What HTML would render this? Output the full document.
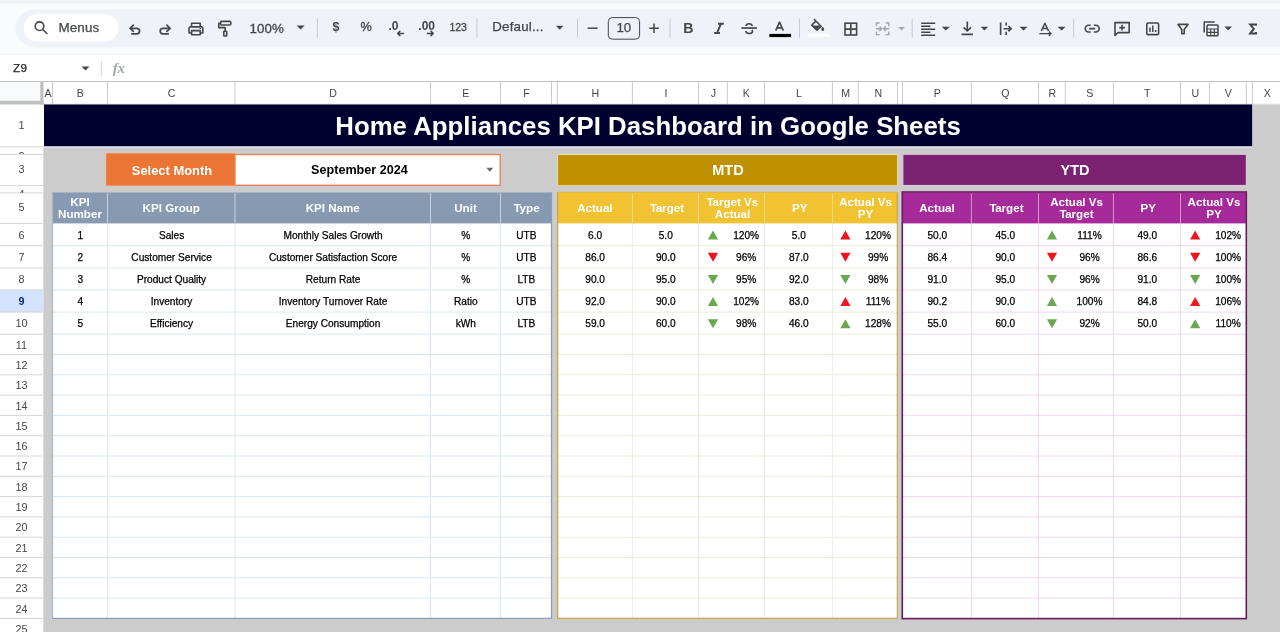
<!DOCTYPE html>
<html lang="en">
<head>
<meta charset="utf-8">
<title>Home Appliances KPI Dashboard in Google Sheets</title>
<style>
html,body{margin:0;padding:0;background:#f9fbfd;}
body{width:1280px;height:632px;overflow:hidden;position:relative;font-family:"Liberation Sans",sans-serif;}
#bg,#icons{position:absolute;left:0;top:0;width:1280px;height:632px;display:block;}
#txt{position:absolute;left:0;top:0;width:1280px;height:632px;will-change:transform;}
.t{position:absolute;white-space:nowrap;margin:0;padding:0;}
</style>
</head>
<body>
<svg id="bg" width="1280" height="632" viewBox="0 0 1280 632">
<rect x="0.00" y="0.00" width="1280.00" height="632.00" fill="#f9fbfd" />
<rect x="0.00" y="0.00" width="1280.00" height="2.60" fill="#f1f3f4" />
<line x1="0.00" y1="2.80" x2="1280.00" y2="2.80" stroke="#e4e6e8" stroke-width="0.8" />
<path d="M34.5 9.4 H1280 V47.3 H34.5 A18.95 18.95 0 0 1 34.5 9.4 Z" fill="#eef2f9"/>
<rect x="23.7" y="14.2" width="95" height="27.3" rx="13.65" fill="#ffffff"/>
<rect x="0.00" y="54.50" width="1280.00" height="27.00" fill="#ffffff" />
<line x1="0.00" y1="54.30" x2="1280.00" y2="54.30" stroke="#eef1f5" stroke-width="0.8" />
<rect x="44.00" y="104.50" width="1236.00" height="527.50" fill="#cccccc" />
<rect x="0.00" y="104.50" width="44.00" height="527.50" fill="#ffffff" />
<rect x="43.30" y="146.30" width="0.90" height="485.70" fill="#cccccc" />
<rect x="0.00" y="81.50" width="1280.00" height="23.00" fill="#ffffff" />
<rect x="0.00" y="81.50" width="40.30" height="19.20" fill="#f8f9fa" />
<rect x="40.30" y="81.50" width="3.20" height="23.00" fill="#c0c0c0" />
<rect x="0.00" y="100.70" width="43.50" height="3.80" fill="#c0c0c0" />
<line x1="0.00" y1="81.50" x2="1280.00" y2="81.50" stroke="#c7c7c7" stroke-width="1" />
<line x1="52.50" y1="81.50" x2="52.50" y2="104.50" stroke="#c9c9c9" stroke-width="1" />
<line x1="107.50" y1="81.50" x2="107.50" y2="104.50" stroke="#c9c9c9" stroke-width="1" />
<line x1="235.00" y1="81.50" x2="235.00" y2="104.50" stroke="#c9c9c9" stroke-width="1" />
<line x1="430.50" y1="81.50" x2="430.50" y2="104.50" stroke="#c9c9c9" stroke-width="1" />
<line x1="500.50" y1="81.50" x2="500.50" y2="104.50" stroke="#c9c9c9" stroke-width="1" />
<line x1="551.50" y1="81.50" x2="551.50" y2="104.50" stroke="#c9c9c9" stroke-width="1" />
<line x1="557.30" y1="81.50" x2="557.30" y2="104.50" stroke="#c9c9c9" stroke-width="1" />
<line x1="632.40" y1="81.50" x2="632.40" y2="104.50" stroke="#c9c9c9" stroke-width="1" />
<line x1="698.50" y1="81.50" x2="698.50" y2="104.50" stroke="#c9c9c9" stroke-width="1" />
<line x1="727.30" y1="81.50" x2="727.30" y2="104.50" stroke="#c9c9c9" stroke-width="1" />
<line x1="764.60" y1="81.50" x2="764.60" y2="104.50" stroke="#c9c9c9" stroke-width="1" />
<line x1="832.40" y1="81.50" x2="832.40" y2="104.50" stroke="#c9c9c9" stroke-width="1" />
<line x1="858.20" y1="81.50" x2="858.20" y2="104.50" stroke="#c9c9c9" stroke-width="1" />
<line x1="897.50" y1="81.50" x2="897.50" y2="104.50" stroke="#c9c9c9" stroke-width="1" />
<line x1="902.50" y1="81.50" x2="902.50" y2="104.50" stroke="#c9c9c9" stroke-width="1" />
<line x1="971.40" y1="81.50" x2="971.40" y2="104.50" stroke="#c9c9c9" stroke-width="1" />
<line x1="1038.50" y1="81.50" x2="1038.50" y2="104.50" stroke="#c9c9c9" stroke-width="1" />
<line x1="1065.30" y1="81.50" x2="1065.30" y2="104.50" stroke="#c9c9c9" stroke-width="1" />
<line x1="1113.40" y1="81.50" x2="1113.40" y2="104.50" stroke="#c9c9c9" stroke-width="1" />
<line x1="1180.50" y1="81.50" x2="1180.50" y2="104.50" stroke="#c9c9c9" stroke-width="1" />
<line x1="1209.60" y1="81.50" x2="1209.60" y2="104.50" stroke="#c9c9c9" stroke-width="1" />
<line x1="1246.30" y1="81.50" x2="1246.30" y2="104.50" stroke="#c9c9c9" stroke-width="1" />
<line x1="1252.40" y1="81.50" x2="1252.40" y2="104.50" stroke="#c9c9c9" stroke-width="1" />
<line x1="43.50" y1="104.20" x2="1280.00" y2="104.20" stroke="#d0d0d0" stroke-width="0.8" />
<rect x="0.00" y="290.00" width="43.50" height="22.10" fill="#d3e3fd" />
<line x1="0.00" y1="146.80" x2="43.30" y2="146.80" stroke="#d6d6d6" stroke-width="1" />
<line x1="0.00" y1="154.40" x2="43.30" y2="154.40" stroke="#d6d6d6" stroke-width="1" />
<line x1="0.00" y1="185.60" x2="43.30" y2="185.60" stroke="#d6d6d6" stroke-width="1" />
<line x1="0.00" y1="192.90" x2="43.30" y2="192.90" stroke="#d6d6d6" stroke-width="1" />
<line x1="0.00" y1="223.40" x2="43.30" y2="223.40" stroke="#d6d6d6" stroke-width="1" />
<line x1="0.00" y1="245.70" x2="43.30" y2="245.70" stroke="#d6d6d6" stroke-width="1" />
<line x1="0.00" y1="268.00" x2="43.30" y2="268.00" stroke="#d6d6d6" stroke-width="1" />
<line x1="0.00" y1="290.00" x2="43.30" y2="290.00" stroke="#d6d6d6" stroke-width="1" />
<line x1="0.00" y1="312.10" x2="43.30" y2="312.10" stroke="#d6d6d6" stroke-width="1" />
<line x1="0.00" y1="334.20" x2="43.30" y2="334.20" stroke="#d6d6d6" stroke-width="1" />
<line x1="0.00" y1="354.50" x2="43.30" y2="354.50" stroke="#d6d6d6" stroke-width="1" />
<line x1="0.00" y1="374.80" x2="43.30" y2="374.80" stroke="#d6d6d6" stroke-width="1" />
<line x1="0.00" y1="395.10" x2="43.30" y2="395.10" stroke="#d6d6d6" stroke-width="1" />
<line x1="0.00" y1="415.40" x2="43.30" y2="415.40" stroke="#d6d6d6" stroke-width="1" />
<line x1="0.00" y1="435.70" x2="43.30" y2="435.70" stroke="#d6d6d6" stroke-width="1" />
<line x1="0.00" y1="456.00" x2="43.30" y2="456.00" stroke="#d6d6d6" stroke-width="1" />
<line x1="0.00" y1="476.30" x2="43.30" y2="476.30" stroke="#d6d6d6" stroke-width="1" />
<line x1="0.00" y1="496.60" x2="43.30" y2="496.60" stroke="#d6d6d6" stroke-width="1" />
<line x1="0.00" y1="516.90" x2="43.30" y2="516.90" stroke="#d6d6d6" stroke-width="1" />
<line x1="0.00" y1="537.20" x2="43.30" y2="537.20" stroke="#d6d6d6" stroke-width="1" />
<line x1="0.00" y1="557.50" x2="43.30" y2="557.50" stroke="#d6d6d6" stroke-width="1" />
<line x1="0.00" y1="577.80" x2="43.30" y2="577.80" stroke="#d6d6d6" stroke-width="1" />
<line x1="0.00" y1="598.10" x2="43.30" y2="598.10" stroke="#d6d6d6" stroke-width="1" />
<line x1="0.00" y1="618.40" x2="43.30" y2="618.40" stroke="#d6d6d6" stroke-width="1" />
<rect x="44.00" y="104.50" width="1208.10" height="41.90" fill="#00002f" />
<rect x="44.00" y="146.40" width="1208.10" height="1.40" fill="#e2e2ee" />
<rect x="105.70" y="152.70" width="129.30" height="33.60" fill="#f0c3aa" />
<rect x="106.20" y="153.40" width="128.80" height="32.20" fill="#ea7535" />
<rect x="235.00" y="154.50" width="265.20" height="30.80" fill="#ffffff" stroke="#e9845a" stroke-width="1.4"/>
<path d="M486.3 167.7 H493.3 L489.8 171.8 Z" fill="#6b6b6b"/>
<rect x="557.30" y="154.10" width="340.60" height="31.90" fill="#efdfae" />
<rect x="558.10" y="155.00" width="339.00" height="30.20" fill="#bf9000" />
<rect x="902.60" y="154.10" width="344.00" height="31.70" fill="#e3c3e0" />
<rect x="903.40" y="154.90" width="342.40" height="30.00" fill="#7a2172" />
<rect x="52.50" y="192.30" width="499.00" height="426.10" fill="#ffffff" />
<rect x="52.50" y="192.30" width="499.00" height="31.10" fill="#879ab2" />
<line x1="52.50" y1="245.70" x2="551.50" y2="245.70" stroke="#d9e9f3" stroke-width="1" />
<line x1="52.50" y1="268.00" x2="551.50" y2="268.00" stroke="#d9e9f3" stroke-width="1" />
<line x1="52.50" y1="290.00" x2="551.50" y2="290.00" stroke="#d9e9f3" stroke-width="1" />
<line x1="52.50" y1="312.10" x2="551.50" y2="312.10" stroke="#d9e9f3" stroke-width="1" />
<line x1="52.50" y1="334.20" x2="551.50" y2="334.20" stroke="#d9e9f3" stroke-width="1" />
<line x1="52.50" y1="354.50" x2="551.50" y2="354.50" stroke="#d9e9f3" stroke-width="1" />
<line x1="52.50" y1="374.80" x2="551.50" y2="374.80" stroke="#d9e9f3" stroke-width="1" />
<line x1="52.50" y1="395.10" x2="551.50" y2="395.10" stroke="#d9e9f3" stroke-width="1" />
<line x1="52.50" y1="415.40" x2="551.50" y2="415.40" stroke="#d9e9f3" stroke-width="1" />
<line x1="52.50" y1="435.70" x2="551.50" y2="435.70" stroke="#d9e9f3" stroke-width="1" />
<line x1="52.50" y1="456.00" x2="551.50" y2="456.00" stroke="#d9e9f3" stroke-width="1" />
<line x1="52.50" y1="476.30" x2="551.50" y2="476.30" stroke="#d9e9f3" stroke-width="1" />
<line x1="52.50" y1="496.60" x2="551.50" y2="496.60" stroke="#d9e9f3" stroke-width="1" />
<line x1="52.50" y1="516.90" x2="551.50" y2="516.90" stroke="#d9e9f3" stroke-width="1" />
<line x1="52.50" y1="537.20" x2="551.50" y2="537.20" stroke="#d9e9f3" stroke-width="1" />
<line x1="52.50" y1="557.50" x2="551.50" y2="557.50" stroke="#d9e9f3" stroke-width="1" />
<line x1="52.50" y1="577.80" x2="551.50" y2="577.80" stroke="#d9e9f3" stroke-width="1" />
<line x1="52.50" y1="598.10" x2="551.50" y2="598.10" stroke="#d9e9f3" stroke-width="1" />
<line x1="107.50" y1="223.40" x2="107.50" y2="618.40" stroke="#d9e9f3" stroke-width="1" />
<line x1="107.50" y1="193.30" x2="107.50" y2="223.40" stroke="#cddbe8" stroke-width="0.9" />
<line x1="235.00" y1="223.40" x2="235.00" y2="618.40" stroke="#d9e9f3" stroke-width="1" />
<line x1="235.00" y1="193.30" x2="235.00" y2="223.40" stroke="#cddbe8" stroke-width="0.9" />
<line x1="430.50" y1="223.40" x2="430.50" y2="618.40" stroke="#d9e9f3" stroke-width="1" />
<line x1="430.50" y1="193.30" x2="430.50" y2="223.40" stroke="#cddbe8" stroke-width="0.9" />
<line x1="500.50" y1="223.40" x2="500.50" y2="618.40" stroke="#d9e9f3" stroke-width="1" />
<line x1="500.50" y1="193.30" x2="500.50" y2="223.40" stroke="#cddbe8" stroke-width="0.9" />
<line x1="52.50" y1="192.30" x2="52.50" y2="618.40" stroke="#a9b7c9" stroke-width="1.2" />
<line x1="551.50" y1="192.30" x2="551.50" y2="618.90" stroke="#8e9fb5" stroke-width="1.3" />
<line x1="52.50" y1="618.40" x2="551.50" y2="618.40" stroke="#8e9fb5" stroke-width="1.3" />
<rect x="557.30" y="192.30" width="340.20" height="426.10" fill="#ffffff" />
<rect x="557.30" y="192.30" width="340.20" height="31.10" fill="#f1c232" />
<line x1="557.30" y1="245.70" x2="897.50" y2="245.70" stroke="#e9eddc" stroke-width="1" />
<line x1="557.30" y1="268.00" x2="897.50" y2="268.00" stroke="#e9eddc" stroke-width="1" />
<line x1="557.30" y1="290.00" x2="897.50" y2="290.00" stroke="#e9eddc" stroke-width="1" />
<line x1="557.30" y1="312.10" x2="897.50" y2="312.10" stroke="#e9eddc" stroke-width="1" />
<line x1="557.30" y1="334.20" x2="897.50" y2="334.20" stroke="#e9eddc" stroke-width="1" />
<line x1="557.30" y1="354.50" x2="897.50" y2="354.50" stroke="#e9eddc" stroke-width="1" />
<line x1="557.30" y1="374.80" x2="897.50" y2="374.80" stroke="#e9eddc" stroke-width="1" />
<line x1="557.30" y1="395.10" x2="897.50" y2="395.10" stroke="#e9eddc" stroke-width="1" />
<line x1="557.30" y1="415.40" x2="897.50" y2="415.40" stroke="#e9eddc" stroke-width="1" />
<line x1="557.30" y1="435.70" x2="897.50" y2="435.70" stroke="#e9eddc" stroke-width="1" />
<line x1="557.30" y1="456.00" x2="897.50" y2="456.00" stroke="#e9eddc" stroke-width="1" />
<line x1="557.30" y1="476.30" x2="897.50" y2="476.30" stroke="#e9eddc" stroke-width="1" />
<line x1="557.30" y1="496.60" x2="897.50" y2="496.60" stroke="#e9eddc" stroke-width="1" />
<line x1="557.30" y1="516.90" x2="897.50" y2="516.90" stroke="#e9eddc" stroke-width="1" />
<line x1="557.30" y1="537.20" x2="897.50" y2="537.20" stroke="#e9eddc" stroke-width="1" />
<line x1="557.30" y1="557.50" x2="897.50" y2="557.50" stroke="#e9eddc" stroke-width="1" />
<line x1="557.30" y1="577.80" x2="897.50" y2="577.80" stroke="#e9eddc" stroke-width="1" />
<line x1="557.30" y1="598.10" x2="897.50" y2="598.10" stroke="#e9eddc" stroke-width="1" />
<line x1="632.40" y1="223.40" x2="632.40" y2="618.40" stroke="#e9eddc" stroke-width="1" />
<line x1="632.40" y1="193.30" x2="632.40" y2="223.40" stroke="#f7dc8a" stroke-width="0.9" />
<line x1="698.50" y1="223.40" x2="698.50" y2="618.40" stroke="#e9eddc" stroke-width="1" />
<line x1="698.50" y1="193.30" x2="698.50" y2="223.40" stroke="#f7dc8a" stroke-width="0.9" />
<line x1="764.60" y1="223.40" x2="764.60" y2="618.40" stroke="#e9eddc" stroke-width="1" />
<line x1="764.60" y1="193.30" x2="764.60" y2="223.40" stroke="#f7dc8a" stroke-width="0.9" />
<line x1="832.40" y1="223.40" x2="832.40" y2="618.40" stroke="#e9eddc" stroke-width="1" />
<line x1="832.40" y1="193.30" x2="832.40" y2="223.40" stroke="#f7dc8a" stroke-width="0.9" />
<line x1="557.60" y1="192.30" x2="557.60" y2="618.40" stroke="#c9a64a" stroke-width="1.3" />
<line x1="897.30" y1="192.30" x2="897.30" y2="618.40" stroke="#c9a64a" stroke-width="1.2" />
<line x1="557.30" y1="618.40" x2="897.50" y2="618.40" stroke="#c9a64a" stroke-width="1.3" />
<line x1="557.30" y1="192.30" x2="897.50" y2="192.30" stroke="#d9ad2d" stroke-width="0.8" />
<rect x="902.50" y="192.30" width="343.80" height="426.10" fill="#ffffff" />
<rect x="902.50" y="192.30" width="343.80" height="31.10" fill="#a72a9b" />
<line x1="902.50" y1="245.70" x2="1246.30" y2="245.70" stroke="#efd9ee" stroke-width="1" />
<line x1="902.50" y1="268.00" x2="1246.30" y2="268.00" stroke="#efd9ee" stroke-width="1" />
<line x1="902.50" y1="290.00" x2="1246.30" y2="290.00" stroke="#efd9ee" stroke-width="1" />
<line x1="902.50" y1="312.10" x2="1246.30" y2="312.10" stroke="#efd9ee" stroke-width="1" />
<line x1="902.50" y1="334.20" x2="1246.30" y2="334.20" stroke="#efd9ee" stroke-width="1" />
<line x1="902.50" y1="354.50" x2="1246.30" y2="354.50" stroke="#efd9ee" stroke-width="1" />
<line x1="902.50" y1="374.80" x2="1246.30" y2="374.80" stroke="#efd9ee" stroke-width="1" />
<line x1="902.50" y1="395.10" x2="1246.30" y2="395.10" stroke="#efd9ee" stroke-width="1" />
<line x1="902.50" y1="415.40" x2="1246.30" y2="415.40" stroke="#efd9ee" stroke-width="1" />
<line x1="902.50" y1="435.70" x2="1246.30" y2="435.70" stroke="#efd9ee" stroke-width="1" />
<line x1="902.50" y1="456.00" x2="1246.30" y2="456.00" stroke="#efd9ee" stroke-width="1" />
<line x1="902.50" y1="476.30" x2="1246.30" y2="476.30" stroke="#efd9ee" stroke-width="1" />
<line x1="902.50" y1="496.60" x2="1246.30" y2="496.60" stroke="#efd9ee" stroke-width="1" />
<line x1="902.50" y1="516.90" x2="1246.30" y2="516.90" stroke="#efd9ee" stroke-width="1" />
<line x1="902.50" y1="537.20" x2="1246.30" y2="537.20" stroke="#efd9ee" stroke-width="1" />
<line x1="902.50" y1="557.50" x2="1246.30" y2="557.50" stroke="#efd9ee" stroke-width="1" />
<line x1="902.50" y1="577.80" x2="1246.30" y2="577.80" stroke="#efd9ee" stroke-width="1" />
<line x1="902.50" y1="598.10" x2="1246.30" y2="598.10" stroke="#efd9ee" stroke-width="1" />
<line x1="971.40" y1="223.40" x2="971.40" y2="618.40" stroke="#efd9ee" stroke-width="1" />
<line x1="971.40" y1="193.30" x2="971.40" y2="223.40" stroke="#d9a3d3" stroke-width="0.9" />
<line x1="1038.50" y1="223.40" x2="1038.50" y2="618.40" stroke="#efd9ee" stroke-width="1" />
<line x1="1038.50" y1="193.30" x2="1038.50" y2="223.40" stroke="#d9a3d3" stroke-width="0.9" />
<line x1="1113.40" y1="223.40" x2="1113.40" y2="618.40" stroke="#efd9ee" stroke-width="1" />
<line x1="1113.40" y1="193.30" x2="1113.40" y2="223.40" stroke="#d9a3d3" stroke-width="0.9" />
<line x1="1180.50" y1="223.40" x2="1180.50" y2="618.40" stroke="#efd9ee" stroke-width="1" />
<line x1="1180.50" y1="193.30" x2="1180.50" y2="223.40" stroke="#d9a3d3" stroke-width="0.9" />
<rect x="902.30" y="192.00" width="344.00" height="426.60" fill="none" stroke="#6b1a5e" stroke-width="1.6"/>
<polygon points="707.90,239.55 718.10,239.55 713.00,230.55" fill="#6aa84f"/>
<polygon points="840.30,239.55 850.50,239.55 845.40,230.55" fill="#f0141b"/>
<polygon points="1046.90,239.55 1057.10,239.55 1052.00,230.55" fill="#6aa84f"/>
<polygon points="1190.05,239.55 1200.25,239.55 1195.15,230.55" fill="#f0141b"/>
<polygon points="707.90,252.85 718.10,252.85 713.00,261.85" fill="#f0141b"/>
<polygon points="840.30,252.85 850.50,252.85 845.40,261.85" fill="#f0141b"/>
<polygon points="1046.90,252.85 1057.10,252.85 1052.00,261.85" fill="#f0141b"/>
<polygon points="1190.05,252.85 1200.25,252.85 1195.15,261.85" fill="#f0141b"/>
<polygon points="707.90,275.00 718.10,275.00 713.00,284.00" fill="#6aa84f"/>
<polygon points="840.30,275.00 850.50,275.00 845.40,284.00" fill="#6aa84f"/>
<polygon points="1046.90,275.00 1057.10,275.00 1052.00,284.00" fill="#6aa84f"/>
<polygon points="1190.05,275.00 1200.25,275.00 1195.15,284.00" fill="#6aa84f"/>
<polygon points="707.90,306.05 718.10,306.05 713.00,297.05" fill="#6aa84f"/>
<polygon points="840.30,306.05 850.50,306.05 845.40,297.05" fill="#f0141b"/>
<polygon points="1046.90,306.05 1057.10,306.05 1052.00,297.05" fill="#6aa84f"/>
<polygon points="1190.05,306.05 1200.25,306.05 1195.15,297.05" fill="#f0141b"/>
<polygon points="707.90,319.15 718.10,319.15 713.00,328.15" fill="#6aa84f"/>
<polygon points="840.30,328.15 850.50,328.15 845.40,319.15" fill="#6aa84f"/>
<polygon points="1046.90,319.15 1057.10,319.15 1052.00,328.15" fill="#6aa84f"/>
<polygon points="1190.05,328.15 1200.25,328.15 1195.15,319.15" fill="#6aa84f"/>
</svg>
<svg id="icons" width="1280" height="632" viewBox="0 0 1280 632">
<path d="M81.6 66.6 H89.4 L85.5 70.5 Z" fill="#444746"/>
<line x1="101.3" y1="61" x2="101.3" y2="76" stroke="#d0d3d8" stroke-width="1"/>
<line x1="317.4" y1="18.8" x2="317.4" y2="37.6" stroke="#c7cad0" stroke-width="1"/>
<line x1="476.9" y1="18.8" x2="476.9" y2="37.6" stroke="#c7cad0" stroke-width="1"/>
<line x1="577.5" y1="18.8" x2="577.5" y2="37.6" stroke="#c7cad0" stroke-width="1"/>
<line x1="670.0" y1="18.8" x2="670.0" y2="37.6" stroke="#c7cad0" stroke-width="1"/>
<line x1="799.5" y1="18.8" x2="799.5" y2="37.6" stroke="#c7cad0" stroke-width="1"/>
<line x1="912.2" y1="18.8" x2="912.2" y2="37.6" stroke="#c7cad0" stroke-width="1"/>
<line x1="1073.6" y1="18.8" x2="1073.6" y2="37.6" stroke="#c7cad0" stroke-width="1"/>
<g fill="none" stroke="#444746" stroke-width="1.6"><circle cx="39.5" cy="26.2" r="4.3"/><path d="M42.8 29.5 L46.9 33.5" stroke-linecap="round"/></g>
<g fill="none" stroke="#444746" stroke-width="1.7" stroke-linecap="round" stroke-linejoin="round"><path d="M130.3 28.3 H136.8 A2.8 2.8 0 0 1 136.8 33.9 H131.9"/><path d="M133.3 25.2 L130.2 28.3 L133.3 31.4"/></g>
<g fill="none" stroke="#444746" stroke-width="1.7" stroke-linecap="round" stroke-linejoin="round"><path d="M169.9 28.3 H163.0 A2.8 2.8 0 0 0 163.0 33.9 H168.2"/><path d="M166.9 25.2 L170.0 28.3 L166.9 31.4"/></g>
<g fill="none" stroke="#444746" stroke-width="1.6" stroke-linejoin="round"><rect x="191.6" y="23.2" width="8.6" height="3.6"/><path d="M191.4 33.0 H189.0 V28.6 A1.8 1.8 0 0 1 190.8 26.8 H201.0 A1.8 1.8 0 0 1 202.8 28.6 V33.0 H200.4"/><rect x="191.6" y="30.6" width="8.6" height="4.2"/></g>
<circle cx="200.2" cy="28.5" r="0.7" fill="#444746"/>
<g fill="none" stroke="#444746" stroke-width="1.6" stroke-linejoin="round"><rect x="220.6" y="21.4" width="10.2" height="3.6" rx="1"/><path d="M220.6 23.2 H218.8 V27.6 H225.2 V31.2"/><rect x="223.8" y="31.2" width="2.9" height="4.8" rx="0.6"/></g>
<path d="M296.6 25.4 H304.6 L300.6 29.6 Z" fill="#444746"/>
<g fill="none" stroke="#444746" stroke-width="1.5" stroke-linecap="round" stroke-linejoin="round"><path d="M403.5 33.4 H397.7 M399.9 31.2 L397.7 33.4 L399.9 35.6"/><path d="M427.3 33.4 H433.2 M431.0 31.2 L433.2 33.4 L431.0 35.6"/></g>
<path d="M556.0 25.7 H563.4 L559.7 29.7 Z" fill="#444746"/>
<path d="M587.6 28.2 H597.6" stroke="#444746" stroke-width="1.5" fill="none"/>
<rect x="608.3" y="17.6" width="31.3" height="21.6" rx="4" fill="none" stroke="#444746" stroke-width="1"/>
<path d="M649.2 28.2 H658.8 M654 23.4 V33.0" stroke="#444746" stroke-width="1.5" fill="none"/>
<path d="M718.0 23.8 H723.8 M714.2 33.0 H720.0 M720.9 23.8 L717.1 33.0" stroke="#444746" stroke-width="1.9" fill="none"/>
<g fill="none" stroke="#444746"><path d="M741.4 28.0 H756.9" stroke-width="1.7"/><path d="M752.2 26.0 C752.0 24.3 750.6 23.7 749.2 23.7 C747.4 23.7 746.0 24.6 746.0 26.0" stroke-width="1.6"/><path d="M745.8 31.0 C746.0 32.7 747.4 33.5 749.2 33.5 C751.0 33.5 752.5 32.7 752.5 31.2 C752.5 30.6 752.2 30.2 751.8 29.9" stroke-width="1.6"/></g>
<path d="M775.7 30.7 L779.5 22.2 L783.3 30.7 M777.0 27.9 H782.0" stroke="#444746" stroke-width="1.6" fill="none" stroke-linejoin="round"/>
<rect x="769.4" y="33.9" width="21.7" height="3.2" fill="#000"/>
<g transform="translate(816.3 24.6) scale(0.92) translate(-816.6 -25.0)"><path d="M814.0 19.0 L822.0 27.0 L817.2 31.0 L811.6 25.6 L816.2 21.2" fill="none" stroke="#444746" stroke-width="1.6" stroke-linejoin="round"/><path d="M812.6 26.0 H821.6 L817.2 30.4 Z" fill="#444746"/><path d="M823.6 27.4 C824.6 28.8 825.2 29.6 825.2 30.3 A1.6 1.6 0 0 1 822.0 30.3 C822.0 29.6 822.6 28.8 823.6 27.4 Z" fill="#444746"/></g>
<rect x="807.6" y="33.9" width="22" height="3.0" fill="#ffffff"/>
<g fill="none" stroke="#444746" stroke-width="1.6"><rect x="845.0" y="23.2" width="11.6" height="11.8"/><path d="M850.8 23.2 V35.0 M845.0 29.1 H856.6"/></g>
<g fill="none" stroke="#a4a8ad" stroke-width="1.4"><path d="M879.6 23.0 H876.4 V26.2 M876.4 31.4 V34.6 H879.6 M885.6 23.0 H888.8 V26.2 M888.8 31.4 V34.6 H885.6"/><path d="M876.0 28.8 H881.4 M879.4 26.6 L881.6 28.8 L879.4 31.0 M889.2 28.8 H883.8 M885.8 26.6 L883.6 28.8 L885.8 31.0" stroke-width="1.5"/></g>
<path d="M898.2 27.0 H905.0 L901.6 30.4 Z" fill="#a4a8ad"/>
<g stroke="#444746" stroke-width="1.5" fill="none"><path d="M921.2 23.2 H935.2 M921.2 26.2 H930.4 M921.2 29.2 H935.2 M921.2 32.2 H930.4 M921.2 35.2 H935.2"/></g>
<path d="M941.8 26.8 H949.8 L945.8 30.4 Z" fill="#444746"/>
<g stroke="#444746" stroke-width="1.6" fill="none" stroke-linejoin="round"><path d="M967.3 21.6 V30.6 M963.6 27.4 L967.3 31.0 L971.0 27.4 M961.6 34.4 H973.0"/></g>
<path d="M980.6 26.8 H988.2 L984.4000000000001 30.4 Z" fill="#444746"/>
<g stroke="#444746" stroke-width="1.6" fill="none" stroke-linejoin="round"><path d="M1000.6 22.4 V35.0 M1006.2 22.4 V25.6 M1006.2 31.8 V35.0 M1003.6 28.7 H1010.8 M1008.4 26.0 L1011.2 28.7 L1008.4 31.4"/></g>
<path d="M1019.4 26.8 H1027.6 L1023.5 30.4 Z" fill="#444746"/>
<g stroke="#444746" stroke-width="1.5" fill="none" stroke-linejoin="round"><path d="M1041.3 31.0 L1044.9 23.2 L1048.5 31.0 M1042.7 28.4 H1047.1"/><path d="M1039.4 33.6 H1050.8 M1048.8 31.5 L1051.0 33.6 L1048.8 35.7" stroke-width="1.4"/></g>
<path d="M1057.6 26.8 H1065.6 L1061.6 30.4 Z" fill="#444746"/>
<g stroke="#444746" stroke-width="1.6" fill="none"><path d="M1090.6 25.2 H1088.6 A3.4 3.4 0 0 0 1088.6 32.0 H1090.6 M1093.8 25.2 H1095.8 A3.4 3.4 0 0 1 1095.8 32.0 H1093.8 M1089.2 28.6 H1095.2"/></g>
<g stroke="#444746" stroke-width="1.6" fill="none" stroke-linejoin="round"><path d="M1115.0 35.4 V22.6 H1129.2 V32.6 H1118.0 Z"/><path d="M1122.1 24.8 V30.4 M1119.3 27.6 H1124.9" stroke-width="1.6"/></g>
<g stroke="#444746" stroke-width="1.6" fill="none" stroke-linejoin="round"><rect x="1146.8" y="23.0" width="11.8" height="11.6" rx="1.2"/><path d="M1150.0 27.6 V32.0 M1152.8 25.6 V32.0 M1155.6 30.0 V32.0" stroke-width="1.5"/></g>
<path d="M1178.0 24.4 H1188.0 L1184.2 29.4 V33.8 H1181.8 V29.4 Z" stroke="#444746" stroke-width="1.6" fill="none" stroke-linejoin="round"/>
<g stroke="#444746" stroke-width="1.5" fill="none" stroke-linejoin="round"><path d="M1204.2 32.6 V22.0 H1214.6"/><rect x="1207.0" y="25.0" width="11.0" height="10.8" rx="0.8"/><path d="M1207.0 29.0 H1218.0 M1207.0 32.4 H1218.0 M1210.7 29.0 V35.8 M1214.3 29.0 V35.8" stroke-width="1.2"/></g>
<path d="M1224.4 26.6 H1232.0 L1228.2 30.4 Z" fill="#444746"/>
<path d="M1256.0 25.8 V24.5 H1250.2 L1253.8 28.9 L1250.2 33.4 H1256.0 V32.0" stroke="#444746" stroke-width="2.0" fill="none" stroke-linejoin="miter"/>
</svg>
<div id="txt">
<div class="t " style="font-size:10.6px;color:#444746;line-height:12.19px;left:-652.00px;width:1400px;text-align:center;top:86.50px;">A</div>
<div class="t " style="font-size:10.6px;color:#444746;line-height:12.19px;left:-619.60px;width:1400px;text-align:center;top:86.50px;">B</div>
<div class="t " style="font-size:10.6px;color:#444746;line-height:12.19px;left:-528.35px;width:1400px;text-align:center;top:86.50px;">C</div>
<div class="t " style="font-size:10.6px;color:#444746;line-height:12.19px;left:-366.85px;width:1400px;text-align:center;top:86.50px;">D</div>
<div class="t " style="font-size:10.6px;color:#444746;line-height:12.19px;left:-234.10px;width:1400px;text-align:center;top:86.50px;">E</div>
<div class="t " style="font-size:10.6px;color:#444746;line-height:12.19px;left:-173.60px;width:1400px;text-align:center;top:86.50px;">F</div>
<div class="t " style="font-size:10.6px;color:#444746;line-height:12.19px;left:-104.75px;width:1400px;text-align:center;top:86.50px;">H</div>
<div class="t " style="font-size:10.6px;color:#444746;line-height:12.19px;left:-34.15px;width:1400px;text-align:center;top:86.50px;">I</div>
<div class="t " style="font-size:10.6px;color:#444746;line-height:12.19px;left:13.30px;width:1400px;text-align:center;top:86.50px;">J</div>
<div class="t " style="font-size:10.6px;color:#444746;line-height:12.19px;left:46.35px;width:1400px;text-align:center;top:86.50px;">K</div>
<div class="t " style="font-size:10.6px;color:#444746;line-height:12.19px;left:98.90px;width:1400px;text-align:center;top:86.50px;">L</div>
<div class="t " style="font-size:10.6px;color:#444746;line-height:12.19px;left:145.70px;width:1400px;text-align:center;top:86.50px;">M</div>
<div class="t " style="font-size:10.6px;color:#444746;line-height:12.19px;left:178.25px;width:1400px;text-align:center;top:86.50px;">N</div>
<div class="t " style="font-size:10.6px;color:#444746;line-height:12.19px;left:237.35px;width:1400px;text-align:center;top:86.50px;">P</div>
<div class="t " style="font-size:10.6px;color:#444746;line-height:12.19px;left:305.35px;width:1400px;text-align:center;top:86.50px;">Q</div>
<div class="t " style="font-size:10.6px;color:#444746;line-height:12.19px;left:352.30px;width:1400px;text-align:center;top:86.50px;">R</div>
<div class="t " style="font-size:10.6px;color:#444746;line-height:12.19px;left:389.75px;width:1400px;text-align:center;top:86.50px;">S</div>
<div class="t " style="font-size:10.6px;color:#444746;line-height:12.19px;left:447.35px;width:1400px;text-align:center;top:86.50px;">T</div>
<div class="t " style="font-size:10.6px;color:#444746;line-height:12.19px;left:495.45px;width:1400px;text-align:center;top:86.50px;">U</div>
<div class="t " style="font-size:10.6px;color:#444746;line-height:12.19px;left:528.35px;width:1400px;text-align:center;top:86.50px;">V</div>
<div class="t " style="font-size:10.6px;color:#444746;line-height:12.19px;left:567.40px;width:1400px;text-align:center;top:86.50px;">X</div>
<div class="t " style="font-size:10.8px;color:#444746;line-height:12.42px;left:-678.55px;width:1400px;text-align:center;top:118.79px;">1</div>
<div class="t " style="font-size:10.8px;color:#444746;line-height:12.42px;left:-678.55px;width:1400px;text-align:center;top:162.79px;">3</div>
<div class="t " style="font-size:10.8px;color:#444746;line-height:12.42px;left:-678.55px;width:1400px;text-align:center;top:200.79px;">5</div>
<div class="t " style="font-size:10.8px;color:#444746;line-height:12.42px;left:-678.55px;width:1400px;text-align:center;top:228.79px;">6</div>
<div class="t " style="font-size:10.8px;color:#444746;line-height:12.42px;left:-678.55px;width:1400px;text-align:center;top:250.79px;">7</div>
<div class="t " style="font-size:10.8px;color:#444746;line-height:12.42px;left:-678.55px;width:1400px;text-align:center;top:272.79px;">8</div>
<div class="t " style="font-size:10.8px;color:#0b2a5c;font-weight:bold;line-height:12.42px;left:-678.55px;width:1400px;text-align:center;top:294.79px;">9</div>
<div class="t " style="font-size:10.8px;color:#444746;line-height:12.42px;left:-678.55px;width:1400px;text-align:center;top:316.79px;">10</div>
<div class="t " style="font-size:10.8px;color:#444746;line-height:12.42px;left:-678.55px;width:1400px;text-align:center;top:338.79px;">11</div>
<div class="t " style="font-size:10.8px;color:#444746;line-height:12.42px;left:-678.55px;width:1400px;text-align:center;top:358.79px;">12</div>
<div class="t " style="font-size:10.8px;color:#444746;line-height:12.42px;left:-678.55px;width:1400px;text-align:center;top:378.79px;">13</div>
<div class="t " style="font-size:10.8px;color:#444746;line-height:12.42px;left:-678.55px;width:1400px;text-align:center;top:399.79px;">14</div>
<div class="t " style="font-size:10.8px;color:#444746;line-height:12.42px;left:-678.55px;width:1400px;text-align:center;top:419.79px;">15</div>
<div class="t " style="font-size:10.8px;color:#444746;line-height:12.42px;left:-678.55px;width:1400px;text-align:center;top:439.79px;">16</div>
<div class="t " style="font-size:10.8px;color:#444746;line-height:12.42px;left:-678.55px;width:1400px;text-align:center;top:459.79px;">17</div>
<div class="t " style="font-size:10.8px;color:#444746;line-height:12.42px;left:-678.55px;width:1400px;text-align:center;top:480.79px;">18</div>
<div class="t " style="font-size:10.8px;color:#444746;line-height:12.42px;left:-678.55px;width:1400px;text-align:center;top:500.79px;">19</div>
<div class="t " style="font-size:10.8px;color:#444746;line-height:12.42px;left:-678.55px;width:1400px;text-align:center;top:520.79px;">20</div>
<div class="t " style="font-size:10.8px;color:#444746;line-height:12.42px;left:-678.55px;width:1400px;text-align:center;top:541.79px;">21</div>
<div class="t " style="font-size:10.8px;color:#444746;line-height:12.42px;left:-678.55px;width:1400px;text-align:center;top:561.79px;">22</div>
<div class="t " style="font-size:10.8px;color:#444746;line-height:12.42px;left:-678.55px;width:1400px;text-align:center;top:581.79px;">23</div>
<div class="t " style="font-size:10.8px;color:#444746;line-height:12.42px;left:-678.55px;width:1400px;text-align:center;top:602.79px;">24</div>
<div class="t " style="font-size:10.8px;color:#444746;line-height:12.42px;left:-678.55px;width:1400px;text-align:center;top:622.79px;">25</div>
<div style="position:absolute;left:0;top:146.30px;width:43.5px;height:8.00px;overflow:hidden"><div class="t" style="left:0;width:42.9px;text-align:center;top:3.90px;font-size:10.8px;line-height:12.4px;color:#444746">2</div></div>
<div style="position:absolute;left:0;top:186.00px;width:43.5px;height:6.60px;overflow:hidden"><div class="t" style="left:0;width:42.9px;text-align:center;top:2.20px;font-size:10.8px;line-height:12.4px;color:#444746">4</div></div>
<div class="t " style="font-size:25.8px;color:#fff;font-weight:bold;line-height:29.67px;left:-52.00px;width:1400px;text-align:center;top:112.07px;">Home Appliances KPI Dashboard in Google Sheets</div>
<div class="t " style="font-size:12.9px;color:#fff;font-weight:bold;line-height:14.83px;left:-528.05px;width:1400px;text-align:center;top:163.58px;">Select Month</div>
<div class="t " style="font-size:12.6px;color:#000;font-weight:bold;line-height:14.49px;left:-340.60px;width:1400px;text-align:center;top:163.25px;">September 2024</div>
<div class="t " style="font-size:14.5px;color:#fff;font-weight:bold;line-height:16.67px;left:28.00px;width:1400px;text-align:center;top:162.46px;">MTD</div>
<div class="t " style="font-size:14.5px;color:#fff;font-weight:bold;line-height:16.67px;left:375.00px;width:1400px;text-align:center;top:162.46px;">YTD</div>
<div class="t " style="font-size:11.6px;color:#fff;font-weight:bold;line-height:12.60px;left:-620.00px;width:1400px;text-align:center;top:195.85px;">KPI<br>Number</div>
<div class="t " style="font-size:11.6px;color:#fff;font-weight:bold;line-height:12.60px;left:-528.75px;width:1400px;text-align:center;top:202.15px;">KPI Group</div>
<div class="t " style="font-size:11.6px;color:#fff;font-weight:bold;line-height:12.60px;left:-367.25px;width:1400px;text-align:center;top:202.15px;">KPI Name</div>
<div class="t " style="font-size:11.6px;color:#fff;font-weight:bold;line-height:12.60px;left:-234.50px;width:1400px;text-align:center;top:202.15px;">Unit</div>
<div class="t " style="font-size:11.6px;color:#fff;font-weight:bold;line-height:12.60px;left:-173.30px;width:1400px;text-align:center;top:202.15px;"><span style="letter-spacing:-1.3px">T</span>ype</div>
<div class="t " style="font-size:11.6px;color:#fff;font-weight:bold;line-height:12.60px;left:-105.15px;width:1400px;text-align:center;top:202.15px;">Actual</div>
<div class="t " style="font-size:11.6px;color:#fff;font-weight:bold;line-height:12.60px;left:-32.95px;width:1400px;text-align:center;top:202.15px;"><span style="letter-spacing:-1.5px">T</span>arget</div>
<div class="t " style="font-size:11.6px;color:#fff;font-weight:bold;line-height:12.60px;left:32.55px;width:1400px;text-align:center;top:195.85px;"><span style="letter-spacing:-1.5px">T</span>arget Vs<br>Actual</div>
<div class="t " style="font-size:11.6px;color:#fff;font-weight:bold;line-height:12.60px;left:99.70px;width:1400px;text-align:center;top:202.15px;">PY</div>
<div class="t " style="font-size:11.6px;color:#fff;font-weight:bold;line-height:12.60px;left:165.55px;width:1400px;text-align:center;top:195.85px;">Actual Vs<br>PY</div>
<div class="t " style="font-size:11.6px;color:#fff;font-weight:bold;line-height:12.60px;left:236.95px;width:1400px;text-align:center;top:202.15px;">Actual</div>
<div class="t " style="font-size:11.6px;color:#fff;font-weight:bold;line-height:12.60px;left:306.55px;width:1400px;text-align:center;top:202.15px;"><span style="letter-spacing:-1.5px">T</span>arget</div>
<div class="t " style="font-size:11.6px;color:#fff;font-weight:bold;line-height:12.60px;left:376.55px;width:1400px;text-align:center;top:195.85px;">Actual Vs<br><span style="letter-spacing:-1.5px">T</span>arget</div>
<div class="t " style="font-size:11.6px;color:#fff;font-weight:bold;line-height:12.60px;left:448.15px;width:1400px;text-align:center;top:202.15px;">PY</div>
<div class="t " style="font-size:11.6px;color:#fff;font-weight:bold;line-height:12.60px;left:514.00px;width:1400px;text-align:center;top:195.85px;">Actual Vs<br>PY</div>
<div class="t " style="font-size:10.15px;color:#000;-webkit-text-stroke:0.25px #000;line-height:11.67px;left:-619.70px;width:1400px;text-align:center;top:229.66px;">1</div>
<div class="t " style="font-size:10.15px;color:#000;-webkit-text-stroke:0.25px #000;line-height:11.67px;left:-528.45px;width:1400px;text-align:center;top:229.66px;">Sales</div>
<div class="t " style="font-size:10.15px;color:#000;-webkit-text-stroke:0.25px #000;line-height:11.67px;left:-366.95px;width:1400px;text-align:center;top:229.66px;">Monthly Sales Growth</div>
<div class="t " style="font-size:10.15px;color:#000;-webkit-text-stroke:0.25px #000;line-height:11.67px;left:-234.20px;width:1400px;text-align:center;top:229.66px;">%</div>
<div class="t " style="font-size:10.15px;color:#000;-webkit-text-stroke:0.25px #000;line-height:11.67px;left:-173.70px;width:1400px;text-align:center;top:229.66px;">UTB</div>
<div class="t " style="font-size:10.15px;color:#000;-webkit-text-stroke:0.25px #000;line-height:11.67px;left:-104.85px;width:1400px;text-align:center;top:229.66px;">6.0</div>
<div class="t " style="font-size:10.15px;color:#000;-webkit-text-stroke:0.25px #000;line-height:11.67px;left:-34.25px;width:1400px;text-align:center;top:229.66px;">5.0</div>
<div class="t " style="font-size:10.15px;color:#000;-webkit-text-stroke:0.25px #000;line-height:11.67px;left:98.80px;width:1400px;text-align:center;top:229.66px;">5.0</div>
<div class="t " style="font-size:10.15px;color:#000;-webkit-text-stroke:0.25px #000;line-height:11.67px;left:237.25px;width:1400px;text-align:center;top:229.66px;">50.0</div>
<div class="t " style="font-size:10.15px;color:#000;-webkit-text-stroke:0.25px #000;line-height:11.67px;left:305.25px;width:1400px;text-align:center;top:229.66px;">45.0</div>
<div class="t " style="font-size:10.15px;color:#000;-webkit-text-stroke:0.25px #000;line-height:11.67px;left:447.25px;width:1400px;text-align:center;top:229.66px;">49.0</div>
<div class="t " style="font-size:10.15px;color:#000;-webkit-text-stroke:0.25px #000;line-height:11.67px;left:46.15px;width:1400px;text-align:center;top:229.66px;">120%</div>
<div class="t " style="font-size:10.15px;color:#000;-webkit-text-stroke:0.25px #000;line-height:11.67px;left:178.05px;width:1400px;text-align:center;top:229.66px;">120%</div>
<div class="t " style="font-size:10.15px;color:#000;-webkit-text-stroke:0.25px #000;line-height:11.67px;left:389.55px;width:1400px;text-align:center;top:229.66px;">111%</div>
<div class="t " style="font-size:10.15px;color:#000;-webkit-text-stroke:0.25px #000;line-height:11.67px;left:528.15px;width:1400px;text-align:center;top:229.66px;">102%</div>
<div class="t " style="font-size:10.15px;color:#000;-webkit-text-stroke:0.25px #000;line-height:11.67px;left:-619.70px;width:1400px;text-align:center;top:251.66px;">2</div>
<div class="t " style="font-size:10.15px;color:#000;-webkit-text-stroke:0.25px #000;line-height:11.67px;left:-528.45px;width:1400px;text-align:center;top:251.66px;">Customer Service</div>
<div class="t " style="font-size:10.15px;color:#000;-webkit-text-stroke:0.25px #000;line-height:11.67px;left:-366.95px;width:1400px;text-align:center;top:251.66px;">Customer Satisfaction Score</div>
<div class="t " style="font-size:10.15px;color:#000;-webkit-text-stroke:0.25px #000;line-height:11.67px;left:-234.20px;width:1400px;text-align:center;top:251.66px;">%</div>
<div class="t " style="font-size:10.15px;color:#000;-webkit-text-stroke:0.25px #000;line-height:11.67px;left:-173.70px;width:1400px;text-align:center;top:251.66px;">UTB</div>
<div class="t " style="font-size:10.15px;color:#000;-webkit-text-stroke:0.25px #000;line-height:11.67px;left:-104.85px;width:1400px;text-align:center;top:251.66px;">86.0</div>
<div class="t " style="font-size:10.15px;color:#000;-webkit-text-stroke:0.25px #000;line-height:11.67px;left:-34.25px;width:1400px;text-align:center;top:251.66px;">90.0</div>
<div class="t " style="font-size:10.15px;color:#000;-webkit-text-stroke:0.25px #000;line-height:11.67px;left:98.80px;width:1400px;text-align:center;top:251.66px;">87.0</div>
<div class="t " style="font-size:10.15px;color:#000;-webkit-text-stroke:0.25px #000;line-height:11.67px;left:237.25px;width:1400px;text-align:center;top:251.66px;">86.4</div>
<div class="t " style="font-size:10.15px;color:#000;-webkit-text-stroke:0.25px #000;line-height:11.67px;left:305.25px;width:1400px;text-align:center;top:251.66px;">90.0</div>
<div class="t " style="font-size:10.15px;color:#000;-webkit-text-stroke:0.25px #000;line-height:11.67px;left:447.25px;width:1400px;text-align:center;top:251.66px;">86.6</div>
<div class="t " style="font-size:10.15px;color:#000;-webkit-text-stroke:0.25px #000;line-height:11.67px;left:46.15px;width:1400px;text-align:center;top:251.66px;">96%</div>
<div class="t " style="font-size:10.15px;color:#000;-webkit-text-stroke:0.25px #000;line-height:11.67px;left:178.05px;width:1400px;text-align:center;top:251.66px;">99%</div>
<div class="t " style="font-size:10.15px;color:#000;-webkit-text-stroke:0.25px #000;line-height:11.67px;left:389.55px;width:1400px;text-align:center;top:251.66px;">96%</div>
<div class="t " style="font-size:10.15px;color:#000;-webkit-text-stroke:0.25px #000;line-height:11.67px;left:528.15px;width:1400px;text-align:center;top:251.66px;">100%</div>
<div class="t " style="font-size:10.15px;color:#000;-webkit-text-stroke:0.25px #000;line-height:11.67px;left:-619.70px;width:1400px;text-align:center;top:273.66px;">3</div>
<div class="t " style="font-size:10.15px;color:#000;-webkit-text-stroke:0.25px #000;line-height:11.67px;left:-528.45px;width:1400px;text-align:center;top:273.66px;">Product Quality</div>
<div class="t " style="font-size:10.15px;color:#000;-webkit-text-stroke:0.25px #000;line-height:11.67px;left:-366.95px;width:1400px;text-align:center;top:273.66px;">Return Rate</div>
<div class="t " style="font-size:10.15px;color:#000;-webkit-text-stroke:0.25px #000;line-height:11.67px;left:-234.20px;width:1400px;text-align:center;top:273.66px;">%</div>
<div class="t " style="font-size:10.15px;color:#000;-webkit-text-stroke:0.25px #000;line-height:11.67px;left:-173.70px;width:1400px;text-align:center;top:273.66px;">LTB</div>
<div class="t " style="font-size:10.15px;color:#000;-webkit-text-stroke:0.25px #000;line-height:11.67px;left:-104.85px;width:1400px;text-align:center;top:273.66px;">90.0</div>
<div class="t " style="font-size:10.15px;color:#000;-webkit-text-stroke:0.25px #000;line-height:11.67px;left:-34.25px;width:1400px;text-align:center;top:273.66px;">95.0</div>
<div class="t " style="font-size:10.15px;color:#000;-webkit-text-stroke:0.25px #000;line-height:11.67px;left:98.80px;width:1400px;text-align:center;top:273.66px;">92.0</div>
<div class="t " style="font-size:10.15px;color:#000;-webkit-text-stroke:0.25px #000;line-height:11.67px;left:237.25px;width:1400px;text-align:center;top:273.66px;">91.0</div>
<div class="t " style="font-size:10.15px;color:#000;-webkit-text-stroke:0.25px #000;line-height:11.67px;left:305.25px;width:1400px;text-align:center;top:273.66px;">95.0</div>
<div class="t " style="font-size:10.15px;color:#000;-webkit-text-stroke:0.25px #000;line-height:11.67px;left:447.25px;width:1400px;text-align:center;top:273.66px;">91.0</div>
<div class="t " style="font-size:10.15px;color:#000;-webkit-text-stroke:0.25px #000;line-height:11.67px;left:46.15px;width:1400px;text-align:center;top:273.66px;">95%</div>
<div class="t " style="font-size:10.15px;color:#000;-webkit-text-stroke:0.25px #000;line-height:11.67px;left:178.05px;width:1400px;text-align:center;top:273.66px;">98%</div>
<div class="t " style="font-size:10.15px;color:#000;-webkit-text-stroke:0.25px #000;line-height:11.67px;left:389.55px;width:1400px;text-align:center;top:273.66px;">96%</div>
<div class="t " style="font-size:10.15px;color:#000;-webkit-text-stroke:0.25px #000;line-height:11.67px;left:528.15px;width:1400px;text-align:center;top:273.66px;">100%</div>
<div class="t " style="font-size:10.15px;color:#000;-webkit-text-stroke:0.25px #000;line-height:11.67px;left:-619.70px;width:1400px;text-align:center;top:295.66px;">4</div>
<div class="t " style="font-size:10.15px;color:#000;-webkit-text-stroke:0.25px #000;line-height:11.67px;left:-528.45px;width:1400px;text-align:center;top:295.66px;">Inventory</div>
<div class="t " style="font-size:10.15px;color:#000;-webkit-text-stroke:0.25px #000;line-height:11.67px;left:-366.95px;width:1400px;text-align:center;top:295.66px;">Inventory Turnover Rate</div>
<div class="t " style="font-size:10.15px;color:#000;-webkit-text-stroke:0.25px #000;line-height:11.67px;left:-234.20px;width:1400px;text-align:center;top:295.66px;">Ratio</div>
<div class="t " style="font-size:10.15px;color:#000;-webkit-text-stroke:0.25px #000;line-height:11.67px;left:-173.70px;width:1400px;text-align:center;top:295.66px;">UTB</div>
<div class="t " style="font-size:10.15px;color:#000;-webkit-text-stroke:0.25px #000;line-height:11.67px;left:-104.85px;width:1400px;text-align:center;top:295.66px;">92.0</div>
<div class="t " style="font-size:10.15px;color:#000;-webkit-text-stroke:0.25px #000;line-height:11.67px;left:-34.25px;width:1400px;text-align:center;top:295.66px;">90.0</div>
<div class="t " style="font-size:10.15px;color:#000;-webkit-text-stroke:0.25px #000;line-height:11.67px;left:98.80px;width:1400px;text-align:center;top:295.66px;">83.0</div>
<div class="t " style="font-size:10.15px;color:#000;-webkit-text-stroke:0.25px #000;line-height:11.67px;left:237.25px;width:1400px;text-align:center;top:295.66px;">90.2</div>
<div class="t " style="font-size:10.15px;color:#000;-webkit-text-stroke:0.25px #000;line-height:11.67px;left:305.25px;width:1400px;text-align:center;top:295.66px;">90.0</div>
<div class="t " style="font-size:10.15px;color:#000;-webkit-text-stroke:0.25px #000;line-height:11.67px;left:447.25px;width:1400px;text-align:center;top:295.66px;">84.8</div>
<div class="t " style="font-size:10.15px;color:#000;-webkit-text-stroke:0.25px #000;line-height:11.67px;left:46.15px;width:1400px;text-align:center;top:295.66px;">102%</div>
<div class="t " style="font-size:10.15px;color:#000;-webkit-text-stroke:0.25px #000;line-height:11.67px;left:178.05px;width:1400px;text-align:center;top:295.66px;">111%</div>
<div class="t " style="font-size:10.15px;color:#000;-webkit-text-stroke:0.25px #000;line-height:11.67px;left:389.55px;width:1400px;text-align:center;top:295.66px;">100%</div>
<div class="t " style="font-size:10.15px;color:#000;-webkit-text-stroke:0.25px #000;line-height:11.67px;left:528.15px;width:1400px;text-align:center;top:295.66px;">106%</div>
<div class="t " style="font-size:10.15px;color:#000;-webkit-text-stroke:0.25px #000;line-height:11.67px;left:-619.70px;width:1400px;text-align:center;top:317.66px;">5</div>
<div class="t " style="font-size:10.15px;color:#000;-webkit-text-stroke:0.25px #000;line-height:11.67px;left:-528.45px;width:1400px;text-align:center;top:317.66px;">Efficiency</div>
<div class="t " style="font-size:10.15px;color:#000;-webkit-text-stroke:0.25px #000;line-height:11.67px;left:-366.95px;width:1400px;text-align:center;top:317.66px;">Energy Consumption</div>
<div class="t " style="font-size:10.15px;color:#000;-webkit-text-stroke:0.25px #000;line-height:11.67px;left:-234.20px;width:1400px;text-align:center;top:317.66px;">kWh</div>
<div class="t " style="font-size:10.15px;color:#000;-webkit-text-stroke:0.25px #000;line-height:11.67px;left:-173.70px;width:1400px;text-align:center;top:317.66px;">LTB</div>
<div class="t " style="font-size:10.15px;color:#000;-webkit-text-stroke:0.25px #000;line-height:11.67px;left:-104.85px;width:1400px;text-align:center;top:317.66px;">59.0</div>
<div class="t " style="font-size:10.15px;color:#000;-webkit-text-stroke:0.25px #000;line-height:11.67px;left:-34.25px;width:1400px;text-align:center;top:317.66px;">60.0</div>
<div class="t " style="font-size:10.15px;color:#000;-webkit-text-stroke:0.25px #000;line-height:11.67px;left:98.80px;width:1400px;text-align:center;top:317.66px;">46.0</div>
<div class="t " style="font-size:10.15px;color:#000;-webkit-text-stroke:0.25px #000;line-height:11.67px;left:237.25px;width:1400px;text-align:center;top:317.66px;">55.0</div>
<div class="t " style="font-size:10.15px;color:#000;-webkit-text-stroke:0.25px #000;line-height:11.67px;left:305.25px;width:1400px;text-align:center;top:317.66px;">60.0</div>
<div class="t " style="font-size:10.15px;color:#000;-webkit-text-stroke:0.25px #000;line-height:11.67px;left:447.25px;width:1400px;text-align:center;top:317.66px;">50.0</div>
<div class="t " style="font-size:10.15px;color:#000;-webkit-text-stroke:0.25px #000;line-height:11.67px;left:46.15px;width:1400px;text-align:center;top:317.66px;">98%</div>
<div class="t " style="font-size:10.15px;color:#000;-webkit-text-stroke:0.25px #000;line-height:11.67px;left:178.05px;width:1400px;text-align:center;top:317.66px;">128%</div>
<div class="t " style="font-size:10.15px;color:#000;-webkit-text-stroke:0.25px #000;line-height:11.67px;left:389.55px;width:1400px;text-align:center;top:317.66px;">92%</div>
<div class="t " style="font-size:10.15px;color:#000;-webkit-text-stroke:0.25px #000;line-height:11.67px;left:528.15px;width:1400px;text-align:center;top:317.66px;">110%</div>
<div class="t " style="font-size:13.4px;color:#444746;letter-spacing:0.15px;-webkit-text-stroke:0.25px #444746;line-height:15.41px;left:58.40px;text-align:left;top:20.20px;">Menus</div>
<div class="t " style="font-size:13.3px;color:#444746;letter-spacing:0.1px;-webkit-text-stroke:0.3px #444746;line-height:15.29px;left:249.60px;text-align:left;top:20.65px;">100%</div>
<div class="t " style="font-size:12.4px;color:#444746;font-weight:bold;line-height:14.26px;left:332.40px;text-align:left;top:20.27px;">$</div>
<div class="t " style="font-size:12.6px;color:#444746;-webkit-text-stroke:0.35px #444746;line-height:14.49px;left:360.60px;text-align:left;top:19.95px;">%</div>
<div class="t " style="font-size:12.0px;color:#444746;font-weight:bold;line-height:13.80px;left:388.40px;text-align:left;top:20.40px;">.0</div>
<div class="t " style="font-size:12.0px;color:#444746;font-weight:bold;line-height:13.80px;left:418.30px;text-align:left;top:20.40px;">.00</div>
<div class="t " style="font-size:10.5px;color:#444746;-webkit-text-stroke:0.3px #444746;line-height:12.07px;left:449.40px;text-align:left;top:21.46px;">123</div>
<div class="t " style="font-size:13.3px;color:#444746;letter-spacing:0.22px;-webkit-text-stroke:0.25px #444746;line-height:15.29px;left:492.20px;text-align:left;top:18.95px;">Defaul...</div>
<div class="t " style="font-size:13.3px;color:#444746;-webkit-text-stroke:0.25px #444746;line-height:15.29px;left:616.40px;text-align:left;top:19.65px;">10</div>
<div class="t " style="font-size:11.8px;color:#1f1f1f;letter-spacing:0.3px;-webkit-text-stroke:0.25px #1f1f1f;line-height:13.57px;left:13.00px;text-align:left;top:61.52px;">Z9</div>
<div class="t" style="left:683.2px;top:19.7px;font-size:14.2px;font-weight:bold;color:#444746;line-height:16.4px">B</div>
<div class="t" style="left:112.8px;top:59.8px;font-size:15px;font-style:italic;font-weight:bold;color:#a3a8ad;font-family:'Liberation Serif',serif;line-height:16px;letter-spacing:-0.3px">fx</div>
</div>
</body>
</html>
